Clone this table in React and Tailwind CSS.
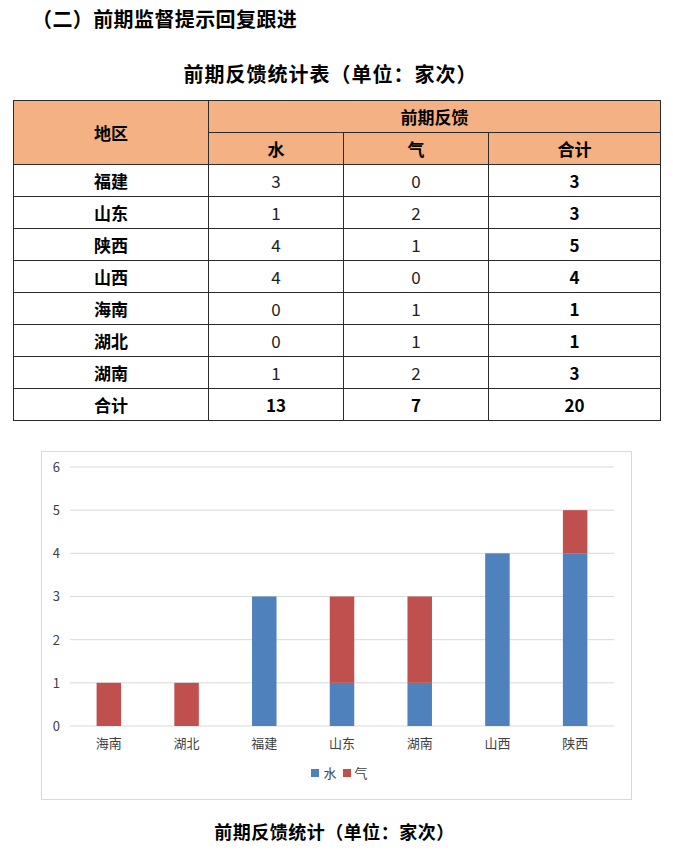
import React from 'react'

const rows = [
  { area: '福建', water: 3, gas: 0 },
  { area: '山东', water: 1, gas: 2 },
  { area: '陕西', water: 4, gas: 1 },
  { area: '山西', water: 4, gas: 0 },
  { area: '海南', water: 0, gas: 1 },
  { area: '湖北', water: 0, gas: 1 },
  { area: '湖南', water: 1, gas: 2 },
]

// chart order is sorted by total
const chartData = [
  { area: '海南', water: 0, gas: 1 },
  { area: '湖北', water: 0, gas: 1 },
  { area: '福建', water: 3, gas: 0 },
  { area: '山东', water: 1, gas: 2 },
  { area: '湖南', water: 1, gas: 2 },
  { area: '山西', water: 4, gas: 0 },
  { area: '陕西', water: 4, gas: 1 },
]

const BLUE = '#4f81bd'
const RED = '#c0504d'

const Chart = () => {
  const left = 28
  const right = 572
  const zeroY = 274
  const step = 43.17
  const slot = (right - left) / chartData.length
  const barW = 24.5

  return (
    <svg width="589" height="347" className="block">
      {[0, 1, 2, 3, 4, 5, 6].map((v) => (
        <g key={v}>
          <line x1={left} x2={right} y1={zeroY - v * step} y2={zeroY - v * step} stroke="#d9d9d9" strokeWidth="1" />
          <text x="18" y={zeroY - v * step + 5} textAnchor="end" fontSize="13" fill="#404040">{v}</text>
        </g>
      ))}
      {chartData.map((d, i) => {
        const cx = left + slot * (i + 0.5)
        const wh = d.water * step
        const gh = d.gas * step
        return (
          <g key={d.area}>
            {d.water > 0 && <rect x={cx - barW / 2} y={zeroY - wh} width={barW} height={wh} fill={BLUE} />}
            {d.gas > 0 && <rect x={cx - barW / 2} y={zeroY - wh - gh} width={barW} height={gh} fill={RED} />}
            <text x={cx} y="296" textAnchor="middle" fontSize="13" fill="#404040">{d.area}</text>
          </g>
        )
      })}
    </svg>
  )
}

const App = () => {
  const totalWater = rows.reduce((s, r) => s + r.water, 0)
  const totalGas = rows.reduce((s, r) => s + r.gas, 0)
  const cell = 'border border-[#2b2b2b] h-[32px] p-0 text-center align-middle'

  return (
    <div className="w-[673px] min-h-[851px] bg-white text-black" style={{ fontFamily: '"Noto Sans CJK SC", "Noto Sans", sans-serif' }}>
      <h1 className="pl-[32px] h-[38px] leading-[38px] text-[20px] font-bold tracking-[0.4px]">（二）前期监督提示回复跟进</h1>

      <div className="mt-[18px] h-[36px] leading-[36px] text-center text-[20px] font-bold tracking-[1px] pr-[12px]">前期反馈统计表（单位：家次）</div>

      <table className="mt-[8px] ml-[13px] w-[647px] table-fixed border-collapse text-[17px]">
        <colgroup>
          <col className="w-[195px]" />
          <col className="w-[135px]" />
          <col className="w-[145px]" />
          <col className="w-[172px]" />
        </colgroup>
        <thead>
          <tr className="bg-[#f4b183]">
            <th rowSpan={2} className={`${cell} font-bold`}>地区</th>
            <th colSpan={3} className={`${cell} font-bold`}>前期反馈</th>
          </tr>
          <tr className="bg-[#f4b183]">
            <th className={`${cell} font-bold`}>水</th>
            <th className={`${cell} font-bold`}>气</th>
            <th className={`${cell} font-bold`}>合计</th>
          </tr>
        </thead>
        <tbody>
          {rows.map((r) => (
            <tr key={r.area}>
              <td className={`${cell} font-bold`}>{r.area}</td>
              <td className={`${cell} font-normal text-[#222]`}>{r.water}</td>
              <td className={`${cell} font-normal text-[#222]`}>{r.gas}</td>
              <td className={`${cell} font-bold`}>{r.water + r.gas}</td>
            </tr>
          ))}
          <tr>
            <td className={`${cell} font-bold`}>合计</td>
            <td className={`${cell} font-bold`}>{totalWater}</td>
            <td className={`${cell} font-bold`}>{totalGas}</td>
            <td className={`${cell} font-bold`}>{totalWater + totalGas}</td>
          </tr>
        </tbody>
      </table>

      <div className="mt-[30px] ml-[41px] w-[591px] h-[349px] border border-[#d9d9d9] relative">
        <Chart />
        <div className="absolute left-0 right-0 top-[314px] flex justify-center items-center gap-[4px] text-[13px] text-[#404040] leading-none pl-[6px]">
          <span className="w-[8px] h-[8px] bg-[#4f81bd]" />
          <span>水</span>
          <span className="w-[8px] h-[8px] bg-[#c0504d] ml-[2px]" />
          <span>气</span>
        </div>
      </div>

      <div className="mt-[16px] h-[30px] leading-[30px] text-center text-[18px] font-bold tracking-[0.5px] pr-[4px]">前期反馈统计（单位：家次）</div>
    </div>
  )
}

export default App
